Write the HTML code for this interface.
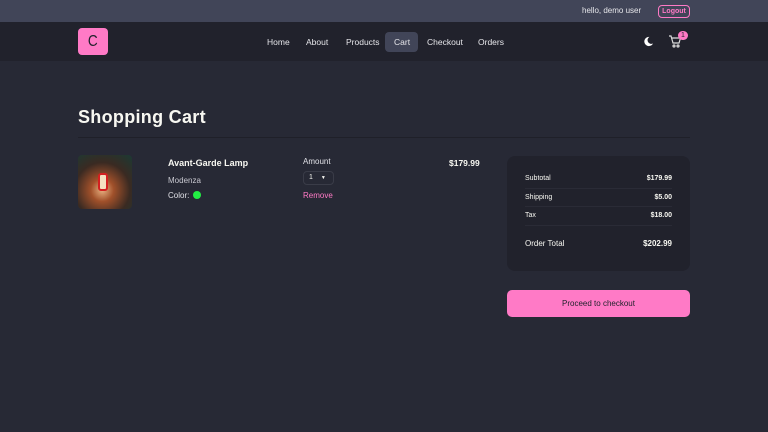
<!DOCTYPE html><html><head><style>
*{margin:0;padding:0;box-sizing:border-box}
body{width:768px;height:432px;background:#272935;font-family:"Liberation Sans",sans-serif;color:#f8f8f2;position:relative;overflow:hidden}
.a{position:absolute}
</style></head><body>
<div class="a" style="left:0;top:0;width:768px;height:22px;background:#414558"></div>
<div class="a" style="left:582px;top:6px;font-size:8px;color:#e6e6ea">hello, demo user</div>
<div class="a" style="left:658px;top:5px;width:32px;height:13px;border:1px solid #ff7ac6;border-radius:4px;font-size:7px;color:#ff7ac6;text-align:center;line-height:11px;font-weight:bold">Logout</div>
<div class="a" style="left:0;top:22px;width:768px;height:39px;background:#21222c"></div>
<div class="a" style="left:78px;top:28px;width:30px;height:27px;background:#ff7ac6;border-radius:4px;color:#21222c;font-size:16px;text-align:center;line-height:27px"><span style="display:inline-block;transform:scaleX(.85)">C</span></div>
<div class="a" style="left:385px;top:32px;width:33px;height:20px;background:#414558;border-radius:4px"></div>
<div class="a" style="top:37px;left:0;font-size:8.5px;color:#e6e6ea">
<span class="a" style="left:267px">Home</span><span class="a" style="left:306px">About</span><span class="a" style="left:346px">Products</span><span class="a" style="left:394px">Cart</span><span class="a" style="left:427px">Checkout</span><span class="a" style="left:478px">Orders</span></div>
<svg class="a" style="left:643px;top:36px" width="11" height="11" viewBox="0 0 12 12"><path d="M7 1A5 5 0 1 0 11 8 4 4 0 0 1 7 1Z" fill="#fff"/></svg>
<svg class="a" style="left:668px;top:35px" width="14" height="13" viewBox="0 0 14 13" fill="none" stroke="#ddd" stroke-width="1.2"><path d="M1 1h2l2 7h6l1.5-5H4"/><circle cx="6" cy="11" r="1"/><circle cx="10" cy="11" r="1"/></svg>
<div class="a" style="left:678px;top:31px;width:10px;height:9px;border-radius:5px;background:#ff7ac6;color:#21222c;font-size:7px;text-align:center;line-height:9px">1</div>
<div class="a" style="left:78px;top:107px;font-size:18px;font-weight:bold;letter-spacing:.3px">Shopping Cart</div>
<div class="a" style="left:78px;top:137px;width:612px;height:1px;background:#1f2029"></div>
<div class="a" style="left:78px;top:155px;width:54px;height:54px;border-radius:4px;background:radial-gradient(circle at 45% 65%,#e8b080 0,#a0502a 25%,#3a2a22 60%,#1b3a34 100%)"></div>
<div class="a" style="left:98px;top:173px;width:10px;height:18px;border:2px solid #d42020;border-radius:3px;background:#f5e0c0"></div>
<div class="a" style="left:168px;top:158px;font-size:9px;font-weight:bold">Avant-Garde Lamp</div>
<div class="a" style="left:168px;top:176px;font-size:8px;color:#c8c8d0">Modenza</div>
<div class="a" style="left:168px;top:191px;font-size:8px;color:#e0e0e6">Color:</div>
<div class="a" style="left:193px;top:191px;width:8px;height:8px;border-radius:50%;background:#22ee44"></div>
<div class="a" style="left:303px;top:157px;font-size:8px;color:#e0e0e6">Amount</div>
<div class="a" style="left:303px;top:171px;width:31px;height:14px;border:1px solid #3a3c48;border-radius:4px;font-size:7px;line-height:12px;padding-left:5px">1 <span style="margin-left:6px;font-size:5px">▼</span></div>
<div class="a" style="left:303px;top:191px;font-size:8px;color:#ff7ac6">Remove</div>
<div class="a" style="left:449px;top:158px;font-size:8.5px;font-weight:bold">$179.99</div>
<div class="a" style="left:507px;top:156px;width:183px;height:115px;background:#21222c;border-radius:8px;font-size:7px">
<div class="a" style="left:18px;top:19px">Subtotal</div><div class="a" style="right:18px;top:19px;font-weight:bold">$179.99</div>
<div class="a" style="left:18px;top:32px;width:147px;height:1px;background:#2a2b36"></div>
<div class="a" style="left:18px;top:38px">Shipping</div><div class="a" style="right:18px;top:38px;font-weight:bold">$5.00</div>
<div class="a" style="left:18px;top:50px;width:147px;height:1px;background:#2a2b36"></div>
<div class="a" style="left:18px;top:56px">Tax</div><div class="a" style="right:18px;top:56px;font-weight:bold">$18.00</div>
<div class="a" style="left:18px;top:69px;width:147px;height:1px;background:#2a2b36"></div>
<div class="a" style="left:18px;top:83px;font-size:8px">Order Total</div><div class="a" style="right:18px;top:83px;font-weight:bold;font-size:8px">$202.99</div>
</div>
<div class="a" style="left:507px;top:290px;width:183px;height:27px;background:#ff7ac6;border-radius:5px;color:#21222c;font-size:8px;text-align:center;line-height:27px">Proceed to checkout</div>
</body></html>
